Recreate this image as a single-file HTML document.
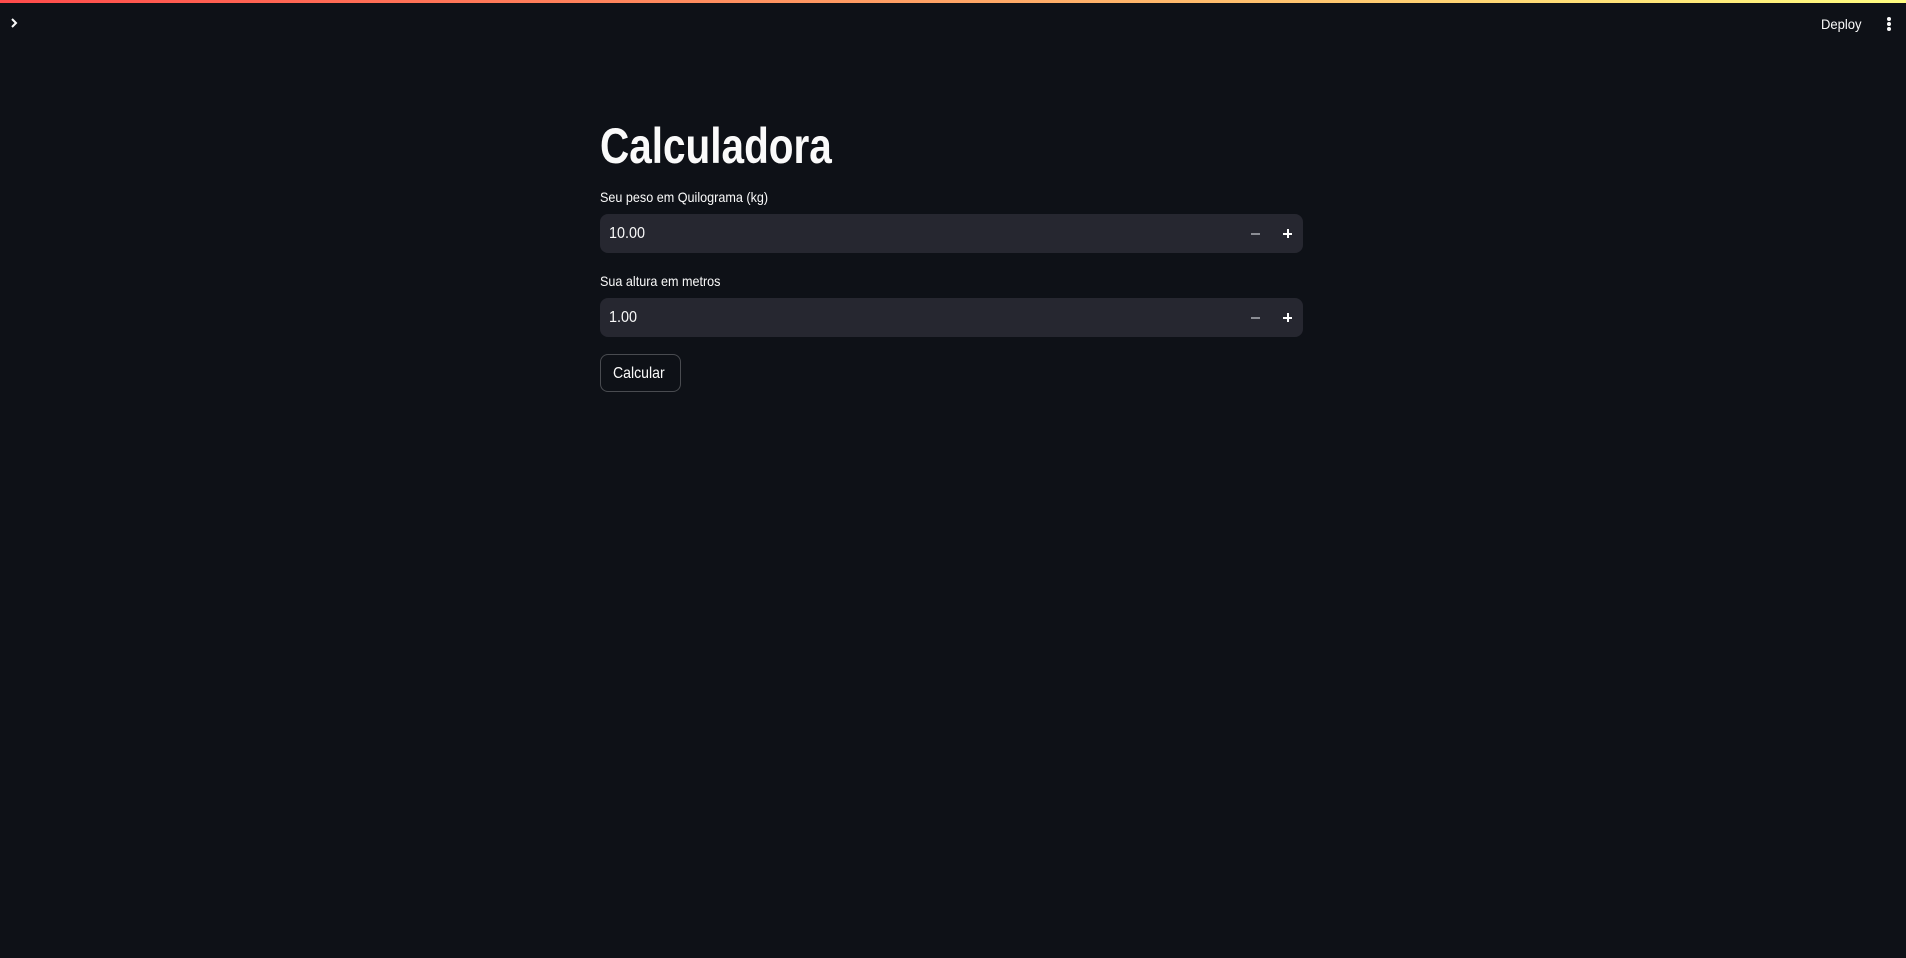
<!DOCTYPE html>
<html><head><meta charset="utf-8"><style>
html,body{margin:0;padding:0;width:1906px;height:958px;background:#0e1117;overflow:hidden;font-family:"Liberation Sans",sans-serif;color:#fafafa}
.bar{position:absolute;left:0;top:0;width:1906px;height:3px;background:linear-gradient(90deg,#ff4b4b,#fffd80)}
.abs{position:absolute;white-space:nowrap;transform-origin:left center}
.inp{position:absolute;left:600px;width:703px;height:39px;background:#262730;border-radius:8px}
.val{position:absolute;left:9px;top:0;line-height:39px;font-size:16px;color:#fafafa;transform:scaleX(.9);transform-origin:left center}
.minus{position:absolute;left:651px;top:19px;width:9px;height:1.5px;background:#8b8d94}
.plus{position:absolute;left:683px;top:15px;width:9px;height:9px}
.plus:before{content:"";position:absolute;left:0;top:3.5px;width:9px;height:2px;background:#fff}
.plus:after{content:"";position:absolute;left:3.5px;top:0;width:2px;height:9px;background:#fff}
</style></head><body>
<div class="bar"></div>
<svg class="abs" style="left:8px;top:17px" width="12" height="12" viewBox="0 0 12 12"><path d="M4 2 L8 6 L4 10" stroke="#fafafa" stroke-width="2" fill="none"/></svg>
<div class="abs" style="left:1821px;top:15px;font-size:14px;line-height:18px;transform:scaleX(.93)">Deploy</div>
<div style="position:absolute;left:1887px;top:17px;width:4px;height:4px;border-radius:2px;background:#fafafa"></div>
<div style="position:absolute;left:1887px;top:22px;width:4px;height:4px;border-radius:2px;background:#fafafa"></div>
<div style="position:absolute;left:1887px;top:27px;width:4px;height:4px;border-radius:2px;background:#fafafa"></div>

<div class="abs" style="left:600px;top:117px;font-size:50px;line-height:58px;font-weight:bold;transform:scaleX(.81)">Calculadora</div>

<div class="abs" style="left:600px;top:188px;font-size:14px;line-height:18px;transform:scaleX(.9)">Seu peso em Quilograma (kg)</div>
<div class="inp" style="top:214px"><div class="val">10.00</div><div class="minus"></div><div class="plus"></div></div>

<div class="abs" style="left:600px;top:272px;font-size:14px;line-height:18px;transform:scaleX(.9)">Sua altura em metros</div>
<div class="inp" style="top:298px"><div class="val">1.00</div><div class="minus"></div><div class="plus"></div></div>

<div style="position:absolute;left:600px;top:354px;width:79px;height:36px;border:1px solid rgba(250,250,250,.25);border-radius:8px;background:#0e1117"></div>
<div class="abs" style="left:613px;top:364px;font-size:16px;line-height:20px;transform:scaleX(.88)">Calcular</div>
</body></html>
